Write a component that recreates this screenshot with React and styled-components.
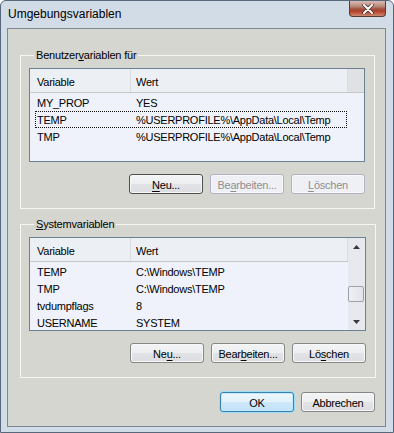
import React from "react";
import styled, { createGlobalStyle } from "styled-components";

const GlobalStyle = createGlobalStyle`
  html, body { margin: 0; padding: 0; background: #ffffff; }
  body { font-family: "Liberation Sans", Arial, sans-serif; }
  * { box-sizing: border-box; }
`;

const Window = styled.div`
  width: 394px;
  height: 433px;
  background: #d2dce6;
  border: 1px solid #56687a;
  border-radius: 6px 6px 0 0;
  display: flex;
  flex-direction: column;
  padding: 0 7px 5px 6px;
`;

const TitleBar = styled.div`
  height: 27px;
  display: flex;
  align-items: flex-start;
  justify-content: space-between;
`;

const Title = styled.div`
  font-size: 12px;
  line-height: 14px;
  color: #000;
  padding: 6px 0 0 1px;
`;

const CloseButton = styled.div`
  width: 37px;
  height: 16px;
  border: 1px solid #5a3a34;
  border-top: none;
  border-radius: 0 0 4px 4px;
  background: linear-gradient(#d9bcb2 0%, #b98a7c 35%, #9c4d3c 55%, #b8412c 70%, #c98a74 100%);
  display: flex;
  align-items: center;
  justify-content: center;
`;

const Client = styled.div`
  flex: 1;
  background: #d5d6cf;
  border: 1px solid #7b8793;
  display: flex;
  flex-direction: column;
  padding: 20px 10px 14px 12px;
`;

const Group = styled.fieldset`
  margin: 0;
  border: 1px solid #f6f6f4;
  padding: 6px 9px 14px 8px;
  display: flex;
  flex-direction: column;
  gap: 12px;
  & + & { margin-top: 9px; }
`;

const Legend = styled.legend`
  font-size: 11px;
  letter-spacing: -0.2px;
  line-height: 13px;
  padding: 0 2px;
  margin-left: 5px;
  color: #000;
`;

const List = styled.div`
  height: 94px;
  border: 1px solid #6a8393;
  background: #eff2fa;
  display: flex;
  overflow: hidden;
`;

const ListMain = styled.div`
  flex: 1;
  display: flex;
  flex-direction: column;
  min-width: 0;
`;

const Header = styled.div`
  height: 24px;
  display: flex;
  border-bottom: 1px solid #c4c8c6;
  flex-shrink: 0;
`;

const HeaderCell = styled.div`
  width: ${(p) => p.$w}px;
  flex-shrink: 0;
  background: #eceff4;
  border-right: 1px solid #d9dce0;
  font-size: 11px;
  letter-spacing: -0.25px;
  color: #000;
  display: flex;
  align-items: center;
  padding: 3px 0 0 ${(p) => p.$pad}px;
`;

const HeaderFiller = styled.div`
  flex: 1;
  background: #dfe1e3;
`;

const Body = styled.div`
  padding: 1px 0 0 5px;
  display: flex;
  flex-direction: column;
`;

const Row = styled.div`
  width: 312px;
  height: 17px;
  flex-shrink: 0;
  display: grid;
  grid-template-columns: 99px 1fr;
  align-items: center;
  padding-left: 1px;
  border: 1px ${(p) => (p.$focused ? "dotted #111" : "solid transparent")};
  font-size: 11px;
  letter-spacing: -0.25px;
  color: #000;
  white-space: nowrap;
`;

const ScrollBar = styled.div`
  width: 17px;
  flex-shrink: 0;
  background: #e7e9ee;
  display: flex;
  flex-direction: column;
`;

const ArrowBox = styled.div`
  height: 17px;
  display: flex;
  align-items: center;
  justify-content: center;
`;

const Track = styled.div`
  flex: 1;
  padding-top: 31px;
`;

const Thumb = styled.div`
  width: 16px;
  height: 16px;
  border: 1px solid #9c9fa6;
  border-radius: 2px;
  background: linear-gradient(90deg, #eef0f3, #e2e4e8);
`;

const ButtonRow = styled.div`
  display: flex;
  justify-content: flex-end;
  gap: 7px;
`;

const DialogButtons = styled(ButtonRow)`
  margin-top: 14px;
  padding-right: 0;
`;

const Button = styled.button`
  width: 74px;
  height: 20px;
  padding: 1px 0 0;
  margin: 0;
  font-family: "Liberation Sans", Arial, sans-serif;
  font-size: 11px;
  letter-spacing: -0.25px;
  border-radius: 3px;
  color: ${(p) => (p.$disabled ? "#8e8e8e" : "#000")};
  border: 1px solid
    ${(p) =>
      p.$disabled ? "#b5b0c6" : p.$default ? "#3c7fb1" : p.$dark ? "#4e4e4e" : "#858686"};
  background: ${(p) =>
    p.$disabled
      ? "#eef0f5"
      : p.$default
      ? "linear-gradient(#eef7fd, #e2f1fc 50%, #cfe8fa 50%, #c2e2f9)"
      : "linear-gradient(#f3f4f6, #eceef0 50%, #e2e3e6 50%, #dcdde0)"};
  box-shadow: ${(p) => (p.$default ? "0 0 0 1px #9fdcf6, inset 0 0 0 1px #bfeafc" : "inset 0 0 0 1px #f8f8f8")};
  display: flex;
  align-items: center;
  justify-content: center;
  & u { text-decoration-thickness: 1px; text-underline-offset: 2px; }
`;

const Up = () => (
  <svg width="7" height="4" viewBox="0 0 7 4">
    <path d="M0 4 L3.5 0 L7 4 Z" fill="#3a3a3a" />
  </svg>
);
const Down = () => (
  <svg width="7" height="4" viewBox="0 0 7 4">
    <path d="M0 0 L3.5 4 L7 0 Z" fill="#3a3a3a" />
  </svg>
);

const CloseX = () => (
  <svg width="12" height="10" viewBox="0 0 12 10">
    <path d="M2 1 L10 9 M10 1 L2 9" stroke="#4a2a24" strokeWidth="3.4" strokeLinecap="round" />
    <path d="M2 1 L10 9 M10 1 L2 9" stroke="#ffffff" strokeWidth="2" strokeLinecap="round" />
  </svg>
);

const userRows = [
  { name: "MY_PROP", value: "YES" },
  { name: "TEMP", value: "%USERPROFILE%\\AppData\\Local\\Temp", focused: true },
  { name: "TMP", value: "%USERPROFILE%\\AppData\\Local\\Temp" },
];

const sysRows = [
  { name: "TEMP", value: "C:\\Windows\\TEMP" },
  { name: "TMP", value: "C:\\Windows\\TEMP" },
  { name: "tvdumpflags", value: "8" },
  { name: "USERNAME", value: "SYSTEM" },
];

function ListHeader({ filler }) {
  return (
    <Header>
      <HeaderCell $w={101} $pad={7}>Variable</HeaderCell>
      <HeaderCell $w={217} $pad={5}>Wert</HeaderCell>
      {filler && <HeaderFiller />}
    </Header>
  );
}

function Rows({ rows }) {
  return (
    <Body>
      {rows.map((r) => (
        <Row key={r.name} $focused={r.focused}>
          <span>{r.name}</span>
          <span>{r.value}</span>
        </Row>
      ))}
    </Body>
  );
}

export default function App() {
  return (
    <>
      <GlobalStyle />
      <Window>
        <TitleBar>
          <Title>Umgebungsvariablen</Title>
          <CloseButton>
            <CloseX />
          </CloseButton>
        </TitleBar>
        <Client>
          <Group>
            <Legend>
              Benutzer<u>v</u>ariablen für
            </Legend>
            <List>
              <ListMain>
                <ListHeader filler />
                <Rows rows={userRows} />
              </ListMain>
            </List>
            <ButtonRow>
              <Button $dark>
                <span><u>N</u>eu...</span>
              </Button>
              <Button $disabled>
                <span>Be<u>a</u>rbeiten...</span>
              </Button>
              <Button $disabled>
                <span><u>L</u>öschen</span>
              </Button>
            </ButtonRow>
          </Group>
          <Group>
            <Legend>
              <u>S</u>ystemvariablen
            </Legend>
            <List>
              <ListMain>
                <ListHeader />
                <Rows rows={sysRows} />
              </ListMain>
              <ScrollBar>
                <ArrowBox>
                  <Up />
                </ArrowBox>
                <Track>
                  <Thumb />
                </Track>
                <ArrowBox>
                  <Down />
                </ArrowBox>
              </ScrollBar>
            </List>
            <ButtonRow>
              <Button>
                <span>Ne<u>u</u>...</span>
              </Button>
              <Button>
                <span>Bear<u>b</u>eiten...</span>
              </Button>
              <Button>
                <span>Lö<u>s</u>chen</span>
              </Button>
            </ButtonRow>
          </Group>
          <DialogButtons>
            <Button $default>OK</Button>
            <Button>Abbrechen</Button>
          </DialogButtons>
        </Client>
      </Window>
    </>
  );
}
